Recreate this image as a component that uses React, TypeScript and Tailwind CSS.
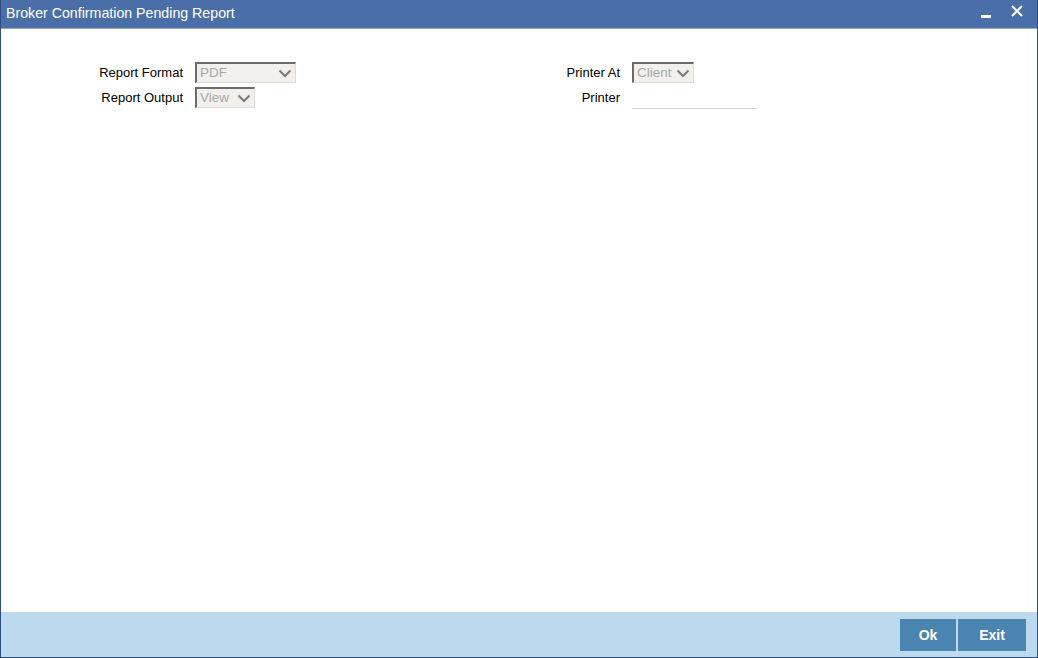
function FakeSelect({ value, width }: { value: string; width: string }) {
  return (
    <div className={`flex h-[21px] ${width} items-center justify-between border-t-2 border-l-2 border-b border-r border-t-[#6b6b6b] border-l-[#6b6b6b] border-b-[#dcdcdc] border-r-[#dcdcdc] bg-[#f1f0ec] pl-[3px] pr-[3px] text-[13.5px] leading-none text-[#a8a8a8]`}>
      <span>{value}</span>
      <svg width="14" height="9" viewBox="0 0 14 9">
        <path d="M1.5 1.5 L7 7 L12.5 1.5" fill="none" stroke="#7a7a7a" strokeWidth="2" />
      </svg>
    </div>
  );
}

export default function App() {
  return (
    <div className="flex h-[658px] w-[1038px] flex-col overflow-hidden border-x border-b border-[#2d4f80] bg-white font-['Liberation_Sans',Arial,sans-serif]">
      <div className="flex h-[29px] shrink-0 items-center justify-between border-b border-[#9aa9b8] bg-[#4a6fa8] pl-[5px] pr-[14px] text-white">
        <span className="text-[14.2px]">Broker Confirmation Pending Report</span>
        <div className="flex items-center gap-[20px]">
          <span className="mt-[4px] block h-[3px] w-[10px] bg-white" />
          <svg width="12" height="12" viewBox="0 0 12 12" className="mb-[6px]">
            <path d="M1 1 L11 11 M11 1 L1 11" stroke="white" strokeWidth="2" />
          </svg>
        </div>
      </div>

      <div className="flex flex-1 items-start pt-[33px] text-[13px] text-black">
        <div className="grid w-[437px] grid-cols-[182px_auto] content-start items-center gap-x-[12px] gap-y-[4px]">
          <span className="text-right">Report Format</span>
          <FakeSelect value="PDF" width="w-[101px]" />
          <span className="text-right">Report Output</span>
          <FakeSelect value="View" width="w-[60px]" />
        </div>
        <div className="grid grid-cols-[182px_auto] content-start items-center gap-x-[12px] gap-y-[4px]">
          <span className="text-right">Printer At</span>
          <FakeSelect value="Client" width="w-[62px]" />
          <span className="text-right">Printer</span>
          <div className="h-[22px] w-[125px] border-b border-[#d6d6d6]" />
        </div>
      </div>

      <div className="flex h-[45px] shrink-0 items-center justify-end gap-[2px] bg-[#bdd9ed] pr-[11px] text-[14px] font-bold text-white">
        <button type="button" className="h-[32px] w-[56px] bg-[#4a84b1] pt-[1px]">Ok</button>
        <button type="button" className="h-[32px] w-[68px] bg-[#4a84b1] pt-[1px]">Exit</button>
      </div>
    </div>
  );
}
